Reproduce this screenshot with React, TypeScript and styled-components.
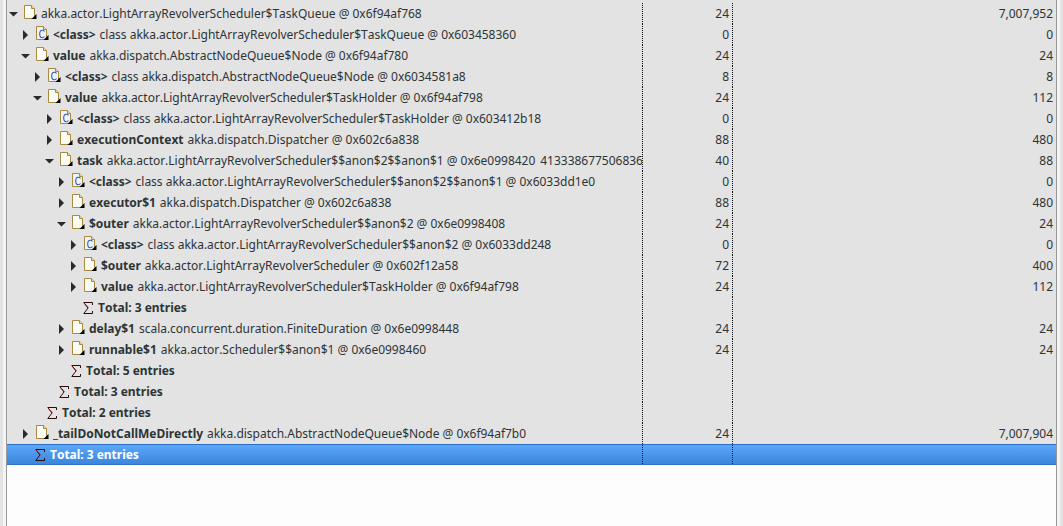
import React from "react";
import styled, { createGlobalStyle } from "styled-components";

const GlobalStyle = createGlobalStyle`
  html, body {
    margin: 0;
    padding: 0;
    background: #e3e3e3;
  }
`;

const Page = styled.div`
  width: 1063px;
  height: 526px;
  overflow: hidden;
  box-sizing: border-box;
  padding: 0 3px;
  font-family: "Noto Sans", sans-serif;
  font-size: 12px;
  font-kerning: none;
  letter-spacing: -0.02px;
  color: #2e3436;
`;

const Frame = styled.div`
  height: 526px;
  box-sizing: border-box;
  padding: 0 3px;
  background: #f4f4f4;
`;

const Table = styled.div`
  height: 526px;
  box-sizing: border-box;
  padding-top: 3px;
  background: #fdfdfd;
  border-left: 1px solid #9a9a9a;
  border-right: 1px solid #9a9a9a;
  box-shadow: inset 0 3px 0 #e3e3e3;
`;

const Row = styled.div<{ $selected?: boolean }>`
  display: grid;
  grid-template-columns: 635px 90px 1fr;
  height: 21px;
  box-sizing: border-box;
  background: ${(p) =>
    p.$selected
      ? "linear-gradient(#5ba8fa, #3b85dc)"
      : "#e3e3e3"};
  border-top: ${(p) => (p.$selected ? "1px solid #2f72c4" : "none")};
  border-bottom: ${(p) => (p.$selected ? "1px solid #2f72c4" : "none")};
  color: ${(p) => (p.$selected ? "#ffffff" : "#2e3436")};
`;

const NameCell = styled.div<{ $level: number }>`
  display: flex;
  align-items: center;
  overflow: hidden;
  white-space: nowrap;
  padding-left: ${(p) => 2 + p.$level * 12}px;
`;

const NumCell = styled.div`
  display: flex;
  align-items: center;
  justify-content: flex-end;
  padding-right: 3px;
  border-left: 1px dotted #111;
  white-space: nowrap;
`;

const Arrow = styled.svg`
  flex: none;
  width: 12px;
  height: 12px;
  margin-right: 3px;
`;

const ArrowGap = styled.span`
  flex: none;
  width: 14px;
`;

const NodeIcon = styled.svg`
  flex: none;
  width: 15px;
  height: 19px;
  margin-right: 2px;
`;

const SumIcon = styled.svg`
  flex: none;
  width: 10px;
  height: 12px;
  margin-right: 5px;
`;

const Field = styled.b`
  font-weight: 700;
  margin-right: 4px;
`;

const Total = styled.b`
  font-weight: 700;
`;

const Extra = styled.span`
  margin-left: 5px;
`;

const TwistyIcon = ({ open }: { open?: boolean }) => (
  <Arrow viewBox="0 0 12 12">
    {open ? (
      <polygon points="0,4 9,4 4.5,8.5" fill="#2a2a2a" />
    ) : (
      <polygon points="2,1 7,6 2,11" fill="#2a2a2a" />
    )}
  </Arrow>
);

const PageIcon = ({ isClass }: { isClass?: boolean }) => (
  <NodeIcon viewBox="0 0 15 19">
    <path
      d="M0.5 1.5H7.5L10.5 4.5V14.5H0.5Z"
      fill={isClass ? "#eef3fb" : "#fbfbf6"}
      stroke="#a98a3c"
      strokeWidth="1"
    />
    <path d="M7.5 1.5V4.5H10.5" fill="#e6dcc0" stroke="#a98a3c" strokeWidth="1" />
    {isClass && (
      <path
        d="M8.5 6.5C8 5.7 7.2 5.3 6.3 5.3C4.7 5.3 3.7 6.8 3.7 9C3.7 11.2 4.7 12.7 6.3 12.7C7.2 12.7 8 12.3 8.5 11.5"
        fill="none"
        stroke="#2f5fa8"
        strokeWidth="1.1"
      />
    )}
    <polygon points="12.5,10 12.5,15 7.5,15" fill="#000" />
  </NodeIcon>
);

const SigmaIcon = () => (
  <SumIcon viewBox="0 0 10 12">
    <path
      d="M9.5 3V0.5H0.8L5 6L0.8 11.5H9.5V9"
      fill="none"
      stroke="#2a0a0a"
      strokeWidth="1"
    />
    <path d="M1 1L5.4 6" stroke="#8a1010" strokeWidth="1" />
  </SumIcon>
);

type Item = {
  level: number;
  open?: boolean;
  isClass?: boolean;
  sigma?: boolean;
  selected?: boolean;
  field?: string;
  text: string;
  extra?: string;
  shallow?: string;
  retained?: string;
};

const rows: Item[] = [
  { level: 0, open: true, text: "akka.actor.LightArrayRevolverScheduler$TaskQueue @ 0x6f94af768", shallow: "24", retained: "7,007,952" },
  { level: 1, isClass: true, field: "<class>", text: "class akka.actor.LightArrayRevolverScheduler$TaskQueue @ 0x603458360", shallow: "0", retained: "0" },
  { level: 1, open: true, field: "value", text: "akka.dispatch.AbstractNodeQueue$Node @ 0x6f94af780", shallow: "24", retained: "24" },
  { level: 2, isClass: true, field: "<class>", text: "class akka.dispatch.AbstractNodeQueue$Node @ 0x6034581a8", shallow: "8", retained: "8" },
  { level: 2, open: true, field: "value", text: "akka.actor.LightArrayRevolverScheduler$TaskHolder @ 0x6f94af798", shallow: "24", retained: "112" },
  { level: 3, isClass: true, field: "<class>", text: "class akka.actor.LightArrayRevolverScheduler$TaskHolder @ 0x603412b18", shallow: "0", retained: "0" },
  { level: 3, field: "executionContext", text: "akka.dispatch.Dispatcher @ 0x602c6a838", shallow: "88", retained: "480" },
  { level: 3, open: true, field: "task", text: "akka.actor.LightArrayRevolverScheduler$$anon$2$$anon$1 @ 0x6e0998420", extra: "41333867750683648", shallow: "40", retained: "88" },
  { level: 4, isClass: true, field: "<class>", text: "class akka.actor.LightArrayRevolverScheduler$$anon$2$$anon$1 @ 0x6033dd1e0", shallow: "0", retained: "0" },
  { level: 4, field: "executor$1", text: "akka.dispatch.Dispatcher @ 0x602c6a838", shallow: "88", retained: "480" },
  { level: 4, open: true, field: "$outer", text: "akka.actor.LightArrayRevolverScheduler$$anon$2 @ 0x6e0998408", shallow: "24", retained: "24" },
  { level: 5, isClass: true, field: "<class>", text: "class akka.actor.LightArrayRevolverScheduler$$anon$2 @ 0x6033dd248", shallow: "0", retained: "0" },
  { level: 5, field: "$outer", text: "akka.actor.LightArrayRevolverScheduler @ 0x602f12a58", shallow: "72", retained: "400" },
  { level: 5, field: "value", text: "akka.actor.LightArrayRevolverScheduler$TaskHolder @ 0x6f94af798", shallow: "24", retained: "112" },
  { level: 5, sigma: true, text: "Total: 3 entries" },
  { level: 4, field: "delay$1", text: "scala.concurrent.duration.FiniteDuration @ 0x6e0998448", shallow: "24", retained: "24" },
  { level: 4, field: "runnable$1", text: "akka.actor.Scheduler$$anon$1 @ 0x6e0998460", shallow: "24", retained: "24" },
  { level: 4, sigma: true, text: "Total: 5 entries" },
  { level: 3, sigma: true, text: "Total: 3 entries" },
  { level: 2, sigma: true, text: "Total: 2 entries" },
  { level: 1, field: "_tailDoNotCallMeDirectly", text: "akka.dispatch.AbstractNodeQueue$Node @ 0x6f94af7b0", shallow: "24", retained: "7,007,904" },
  { level: 1, sigma: true, selected: true, text: "Total: 3 entries" },
];

const App: React.FC = () => (
  <Page>
    <GlobalStyle />
    <Frame>
      <Table>
        {rows.map((r, i) => (
          <Row key={i} $selected={r.selected}>
            <NameCell $level={r.level}>
              {r.sigma ? <ArrowGap /> : <TwistyIcon open={r.open} />}
              {r.sigma ? <SigmaIcon /> : <PageIcon isClass={r.isClass} />}
              {r.sigma ? (
                <Total>{r.text}</Total>
              ) : (
                <>
                  {r.field && <Field>{r.field}</Field>}
                  {r.text}
                  {r.extra && <Extra>{r.extra}</Extra>}
                </>
              )}
            </NameCell>
            <NumCell>{r.shallow}</NumCell>
            <NumCell>{r.retained}</NumCell>
          </Row>
        ))}
      </Table>
    </Frame>
  </Page>
);

export default App;
